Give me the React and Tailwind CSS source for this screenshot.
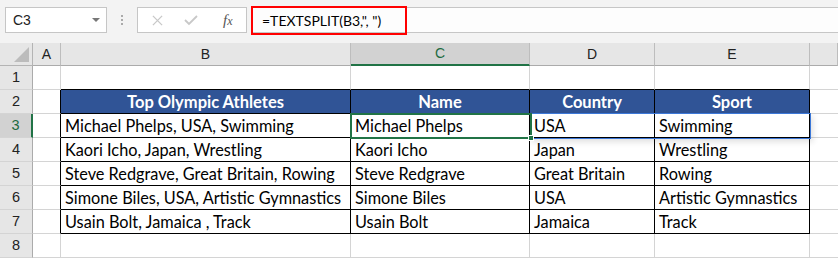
import React from 'react'

const cols = ['A', 'B', 'C', 'D', 'E', '']
const gridCols = 'grid-cols-[33px_28px_290px_179px_125px_155px_1fr]'

const rows = [
  ['Michael Phelps, USA, Swimming', 'Michael Phelps', 'USA', 'Swimming'],
  ['Kaori Icho, Japan, Wrestling', 'Kaori Icho', 'Japan', 'Wrestling'],
  ['Steve Redgrave, Great Britain, Rowing', 'Steve Redgrave', 'Great Britain', 'Rowing'],
  ['Simone Biles, USA, Artistic Gymnastics', 'Simone Biles', 'USA', 'Artistic Gymnastics'],
  ['Usain Bolt, Jamaica , Track', 'Usain Bolt', 'Jamaica', 'Track'],
]

const cellFont = "font-['Lato',sans-serif] text-[16.3px] text-black"

const FormulaBar = () => (
  <div className="h-[43px] bg-[#f3f3f3] flex items-start pt-[7px] font-['Liberation_Sans',sans-serif]">
    <div className="ml-[5px] w-[102px] h-[26px] bg-white border border-[#c6c6c6] flex items-center justify-between pl-[7px] pr-[6px]">
      <span className="text-[14px] text-[#222]">C3</span>
      <span className="w-0 h-0 border-l-[4px] border-r-[4px] border-t-[4px] border-l-transparent border-r-transparent border-t-[#777]" />
    </div>
    <div className="w-[30px] h-[26px] flex flex-col items-center justify-center gap-[2px]">
      <span className="w-[2px] h-[2px] bg-[#aaa]" />
      <span className="w-[2px] h-[2px] bg-[#aaa]" />
      <span className="w-[2px] h-[2px] bg-[#aaa]" />
    </div>
    <div className="w-[110px] h-[26px] bg-white border border-[#c6c6c6] flex items-center pl-[14px] gap-[21px]">
      <svg width="11" height="11" viewBox="0 0 12 12">
        <path d="M1 1 L11 11 M11 1 L1 11" stroke="#c8c8c8" strokeWidth="1.4" />
      </svg>
      <svg width="14" height="12" viewBox="0 0 14 12">
        <path d="M1 6 L5 10 L13 2" stroke="#c8c8c8" strokeWidth="1.8" fill="none" />
      </svg>
      <span className="font-['Liberation_Serif',serif] italic text-[15px] text-[#555] ml-[4px]">
        f<span className="text-[12px]">x</span>
      </span>
    </div>
    <div className="flex-1 h-[26px] bg-[#fdfdfd] border-y border-[#c6c6c6] ml-[4px] flex items-center relative">
      <div className="absolute left-0 top-[-2px] w-[156px] h-[29px] border-2 border-[#ff0000]" />
      <span className="pl-[11px] font-['Lato',sans-serif] text-[14px] text-black">=TEXTSPLIT(B3,", ")</span>
    </div>
  </div>
)

const App = () => {
  return (
    <div className="w-[838px] h-[258px] overflow-hidden bg-white relative">
      <FormulaBar />
      <div className={`grid ${gridCols} font-['Liberation_Sans',sans-serif]`}>
        <div className="h-[23px] bg-[#e6e6e6] border-r border-b border-[#b4b4b4] relative">
          <svg className="absolute right-[3px] bottom-[3px]" width="15" height="15" viewBox="0 0 15 15">
            <path d="M15 0 L15 15 L0 15 Z" fill="#bcbcbc" />
          </svg>
        </div>
        {cols.map((c, i) => (
          <div
            key={i}
            className={`h-[23px] flex items-center justify-center text-[14px] border-r border-[#bdbdbd] ${
              c === 'C'
                ? 'bg-[#d2d2d2] text-[#1e6b41] border-b-2 border-b-[#217346]'
                : 'bg-[#e6e6e6] text-[#222] border-b border-b-[#ababab]'
            }`}
          >
            {c}
          </div>
        ))}

        {[1, 2, 3, 4, 5, 6, 7, 8].map((r) => {
          const data = r >= 3 && r <= 7 ? rows[r - 3] : null
          const inTable = r >= 2 && r <= 7
          return (
            <React.Fragment key={r}>
              <div
                className={`h-[24px] flex items-center justify-center text-[14.5px] border-b border-[#d4d4d4] ${
                  r === 3
                    ? 'bg-[#d2d2d2] text-[#1e6b41] border-r-2 border-r-[#217346]'
                    : 'bg-[#e6e6e6] text-[#222] border-r border-r-[#ababab]'
                }`}
              >
                {r}
              </div>
              <div
                className={`h-[24px] border-b border-b-[#d4d4d4] border-r ${
                  inTable ? 'border-r-black' : 'border-r-[#d4d4d4]'
                }`}
              />
              {[0, 1, 2, 3].map((k) => {
                if (r === 2) {
                  return (
                    <div
                      key={k}
                      className="h-[24px] pt-[1px] bg-[#305496] border-r border-b border-black flex items-center justify-center font-['Lato',sans-serif] font-bold text-[16.5px] text-white"
                    >
                      {['Top Olympic Athletes', 'Name', 'Country', 'Sport'][k]}
                    </div>
                  )
                }
                if (data) {
                  return (
                    <div
                      key={k}
                      className={`h-[24px] pt-[2px] border-r border-b border-black flex items-center pl-[4px] whitespace-nowrap ${cellFont}`}
                    >
                      {data[k]}
                    </div>
                  )
                }
                return (
                  <div
                    key={k}
                    className={`h-[24px] border-r border-r-[#d4d4d4] border-b ${
                      r === 1 ? 'border-b-black' : 'border-b-[#d4d4d4]'
                    }`}
                  />
                )
              })}
              <div className="h-[24px] border-b border-[#d4d4d4]" />
            </React.Fragment>
          )
        })}
      </div>

      {/* spill range outline */}
      <div className="absolute left-[530px] top-[113px] w-[281px] h-[26px] border border-[#3c78d8] shadow-[2px_3px_6px_rgba(0,0,0,0.12)] pointer-events-none" />
      {/* active cell */}
      <div className="absolute left-[350px] top-[113px] w-[182px] h-[26px] border-2 border-[#217346] pointer-events-none" />
      <div className="absolute left-[528px] top-[135px] w-[6px] h-[6px] bg-[#217346] border border-white pointer-events-none" />
    </div>
  )
}

export default App
